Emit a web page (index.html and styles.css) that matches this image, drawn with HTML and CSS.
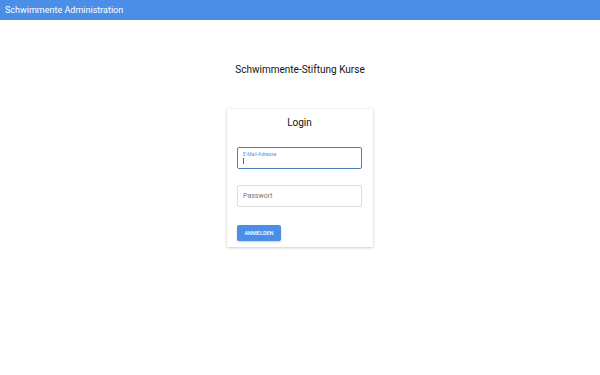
FILE: index.html
```html
<!DOCTYPE html>
<html lang="de">
<head>
<meta charset="utf-8">
<title>Schwimmente Administration</title>
<link rel="stylesheet" href="styles.css">
</head>
<body>
<header class="topbar">Schwimmente Administration</header>
<main class="main">
  <h1 class="page-title">Schwimmente-Stiftung Kurse</h1>
  <section class="card">
    <h2 class="card-title">Login</h2>
    <div class="field field-focused">
      <span class="field-label">E-Mail-Adresse</span>
      <span class="caret"></span>
    </div>
    <div class="field">
      <span class="field-placeholder">Passwort</span>
    </div>
    <button class="btn">ANMELDEN</button>
  </section>
</main>
</body>
</html>
```
FILE: styles.css
```css
* { box-sizing: border-box; }
html, body { margin: 0; padding: 0; background: #fff; }
body {
  font-family: Roboto, "Liberation Sans", sans-serif;
  width: 600px;
  height: 375px;
  overflow: hidden;
}
.topbar {
  height: 20px;
  background: #4a8ee8;
  color: #fff;
  font-size: 9px;
  line-height: 20px;
  padding-left: 5px;
}
.main {
  display: flex;
  flex-direction: column;
  align-items: center;
}
.page-title {
  margin: 43px 0 0;
  font-size: 10px;
  font-weight: 400;
  line-height: 14px;
  color: #111;
}
.card {
  margin-top: 32px;
  width: 146px;
  padding: 7px 11px 6px 10px;
  background: #fff;
  box-shadow: 0 1px 3px rgba(0,0,0,0.18), 0 0 1px rgba(0,0,0,0.12);
  display: flex;
  flex-direction: column;
}
.card-title {
  margin: 0 0 17px;
  font-size: 10px;
  font-weight: 400;
  line-height: 14px;
  text-align: center;
  color: #111;
}
.field {
  height: 22px;
  border: 1px solid #ddd;
  border-radius: 2px;
  display: flex;
  flex-direction: column;
  justify-content: center;
  padding: 0 5px;
  margin-bottom: 16px;
}
.field-focused {
  border-color: #4a7fc0;
  justify-content: flex-start;
  padding-top: 3px;
}
.field-label {
  font-size: 5px;
  line-height: 6px;
  color: #5b93d8;
}
.caret {
  display: block;
  width: 1px;
  height: 6px;
  margin-top: 1px;
  background: #666;
}
.field-placeholder {
  font-size: 7px;
  color: #777;
}
.btn {
  align-self: flex-start;
  margin-top: 2px;
  width: 44px;
  height: 16px;
  border: none;
  border-radius: 2px;
  background: #4a8ee8;
  color: #fff;
  font-family: Roboto, "Liberation Sans", sans-serif;
  font-size: 5.5px;
  font-weight: 500;
  padding: 0;
  box-shadow: 0 1px 2px rgba(0,0,0,0.2);
}
```
